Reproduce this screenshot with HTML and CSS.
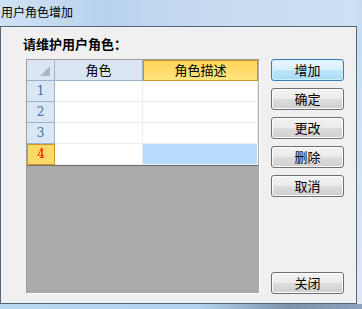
FILE: index.html
```html
<!DOCTYPE html>
<html lang="zh-CN">
<head>
  <meta charset="UTF-8" />
  <title>用户角色增加</title>
  <link rel="stylesheet" href="styles.css">
</head>
<body>
  <div class="frame">
    <div class="titlebar">用户角色增加</div>
    <div class="client">
      <div class="left">
        <div class="label">请维护用户角色：</div>
        <div class="grid">
          <div class="cells">
            <div class="corner"><span class="tri"></span></div>
            <div class="colhead">角色</div>
            <div class="colhead active">角色描述</div>

            <div class="rowhead">1</div>
            <div class="cell"></div>
            <div class="cell"></div>

            <div class="rowhead">2</div>
            <div class="cell"></div>
            <div class="cell"></div>

            <div class="rowhead">3</div>
            <div class="cell"></div>
            <div class="cell"></div>

            <div class="rowhead current">4</div>
            <div class="cell"></div>
            <div class="cell selected"></div>
          </div>
          <div class="empty"></div>
        </div>
      </div>
      <div class="buttons">
        <button class="btn default">增加</button>
        <button class="btn">确定</button>
        <button class="btn">更改</button>
        <button class="btn">删除</button>
        <button class="btn">取消</button>
        <button class="btn close">关闭</button>
      </div>
    </div>
  </div>
</body>
</html>
```

FILE: styles.css
```css
html, body {
  margin: 0;
  height: 100%;
}

body {
  font-family: "Noto Sans CJK SC", "DejaVu Sans", sans-serif;
  background:
    linear-gradient(180deg, #c6dcf1, #dfe9f4) 0 0 / 100% 304px no-repeat,
    linear-gradient(90deg, #b9d6f2 0%, #b3d2f0 55%, #7d93ab 80%, #8ba3bd 100%);
  width: 362px;
  height: 309px;
  overflow: hidden;
  color: #000;
}

.frame {
  width: 357px;
}

.titlebar {
  height: 26px;
  line-height: 24px;
  padding-left: 1px;
  font-size: 12px;
  background: linear-gradient(90deg, #cfe2f5 0%, #b8d2ec 30%, #c8dcf1 60%, #cde0f4 100%);
}

.client {
  box-sizing: border-box;
  height: 278px;
  border: 1px solid #55657a;
  background: #f0f0f0;
  display: flex;
  padding: 9px 0 9px 22px;
}

.label {
  font-size: 13px;
  font-weight: bold;
  line-height: 16px;
  height: 16px;
}

.grid {
  margin: 7px 0 0 3px;
  width: 234px;
  height: 235px;
  box-sizing: border-box;
  border-top: 1px solid #a0a0a0;
  border-left: 1px solid #a0a0a0;
  border-right: 1px solid #fff;
  border-bottom: 1px solid #fff;
  background: #ababab;
  display: flex;
  flex-direction: column;
}

.cells {
  display: grid;
  grid-template-columns: 28px 88px 115px;
  grid-auto-rows: 21px;
  background: #ababab;
}

.cells > div {
  box-sizing: border-box;
  font-size: 13px;
  line-height: 20px;
  text-align: center;
}

.corner {
  background: #dae6f4;
  border-right: 1px solid #9eb1c8;
  border-bottom: 1px solid #9eb1c8;
  position: relative;
}

.tri {
  position: absolute;
  right: 4px;
  bottom: 4px;
  width: 0;
  height: 0;
  border-left: 10px solid transparent;
  border-bottom: 10px solid #a8b7cc;
}

.colhead {
  background: #dae6f4;
  border-right: 1px solid #9eb1c8;
  border-bottom: 1px solid #9eb1c8;
}

.colhead.active {
  background: linear-gradient(180deg, #ffd45a, #ffe57e);
  border: 1px solid #c8922c;
  line-height: 18px;
}

.rowhead {
  background: #dae6f4;
  border-right: 1px solid #9eb1c8;
  border-bottom: 1px solid #9eb1c8;
  color: #3f6ea8;
  font-family: "DejaVu Serif", serif;
  font-size: 12px !important;
}

.rowhead.current {
  background: #ffd966;
  border: 1px solid #d0952e;
  color: #f00;
  line-height: 18px !important;
}

.cell {
  background: #fff;
  border-right: 1px solid #ececec;
  border-bottom: 1px solid #ececec;
}

.cell.selected {
  background: #b7dafd;
  border-right-color: #fff;
}

.empty {
  flex: 1;
  border-top: 1px solid #6f6f6f;
}

.buttons {
  display: flex;
  flex-direction: column;
  gap: 7px;
  margin-left: 11px;
  padding-top: 23px;
}

.btn {
  width: 73px;
  height: 22px;
  padding: 0;
  font-family: inherit;
  font-size: 13px;
  line-height: 18px;
  color: #000;
  border: 1px solid #707070;
  border-radius: 3px;
  box-shadow: inset 0 0 0 1px #fcfcfc;
  background: linear-gradient(180deg, #f2f2f2 0%, #ebebeb 48%, #dddddd 52%, #cfcfcf 100%);
}

.btn.default {
  border-color: #3c7fb1;
  box-shadow: inset 0 0 0 1px #ccf0fe;
  background: linear-gradient(180deg, #eaf6fd 0%, #d9f0fc 48%, #bee6fd 52%, #a7d9f5 100%);
}

.btn.close {
  margin-top: auto;
}
```
